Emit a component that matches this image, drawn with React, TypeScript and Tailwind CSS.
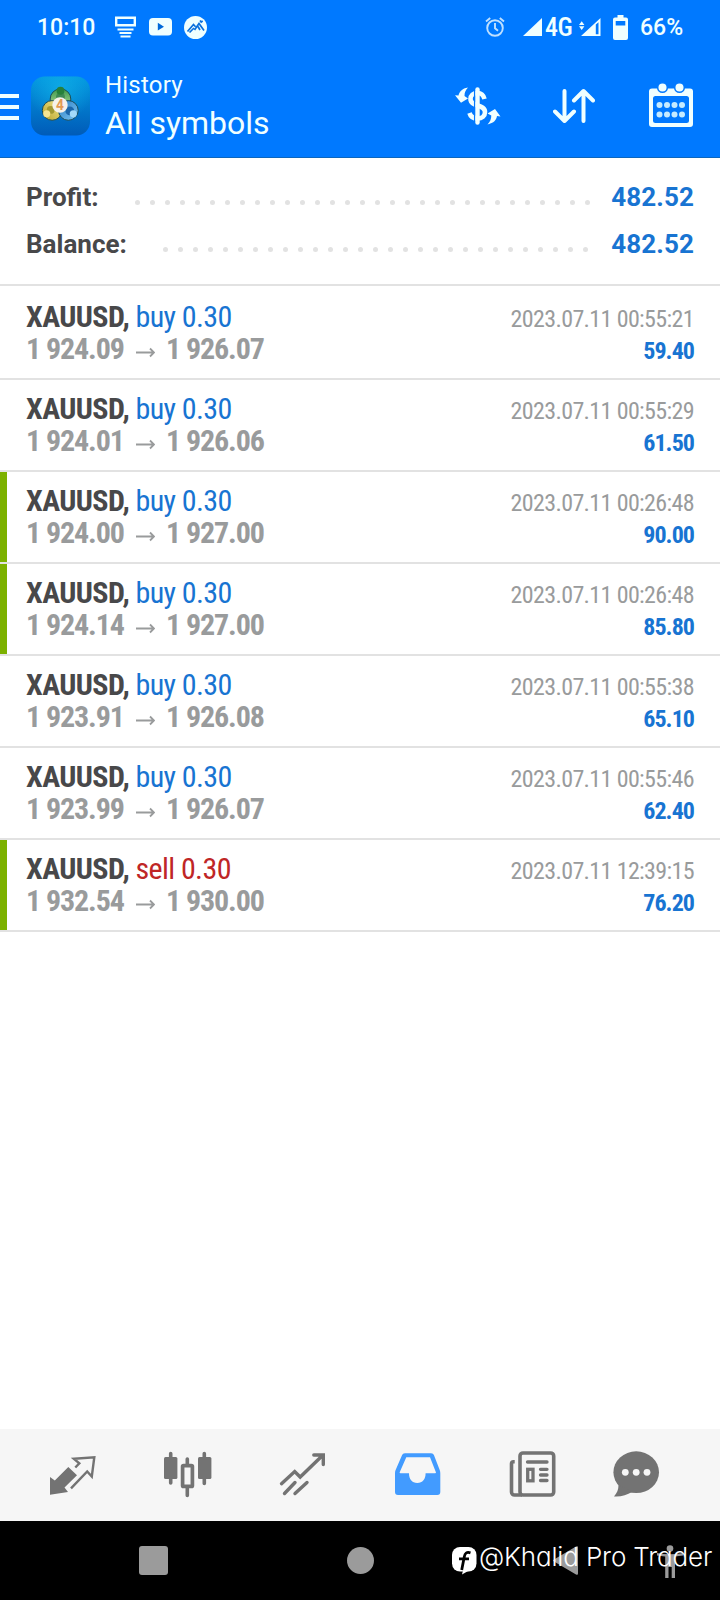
import type { ReactNode } from "react";

interface Deal {
  side: "buy" | "sell";
  open: string;
  close: string;
  time: string;
  profit: string;
  takeProfit?: boolean;
}

const deals: Deal[] = [
  { side: "buy", open: "1 924.09", close: "1 926.07", time: "2023.07.11 00:55:21", profit: "59.40" },
  { side: "buy", open: "1 924.01", close: "1 926.06", time: "2023.07.11 00:55:29", profit: "61.50" },
  { side: "buy", open: "1 924.00", close: "1 927.00", time: "2023.07.11 00:26:48", profit: "90.00", takeProfit: true },
  { side: "buy", open: "1 924.14", close: "1 927.00", time: "2023.07.11 00:26:48", profit: "85.80", takeProfit: true },
  { side: "buy", open: "1 923.91", close: "1 926.08", time: "2023.07.11 00:55:38", profit: "65.10" },
  { side: "buy", open: "1 923.99", close: "1 926.07", time: "2023.07.11 00:55:46", profit: "62.40" },
  { side: "sell", open: "1 932.54", close: "1 930.00", time: "2023.07.11 12:39:15", profit: "76.20", takeProfit: true },
];

function StatusBar() {
  return (
    <div className="flex h-[54px] items-center pl-[37px] pr-[37px] text-[23px] font-medium leading-none">
      <span className="w-[58px]">10:10</span>
      <svg className="ml-5 shrink-0" width="21" height="22" viewBox="0 0 21 22" fill="none" stroke="currentColor">
        <path d="M1.2 1.7h18.6v7.6H1.2z" strokeWidth="2.4" />
        <path d="M2.5 13.5h16M4.5 17h12M5.5 20.5h10" strokeWidth="2" />
      </svg>
      <svg className="ml-[13px] shrink-0" width="23" height="18" viewBox="0 0 23 18">
        <rect width="23" height="17.5" rx="4" fill="currentColor" />
        <path d="M8.8 4.8v7.8l6.2-3.9z" fill="#0069d9" />
      </svg>
      <svg className="ml-3 shrink-0" width="23" height="23" viewBox="0 0 23 23">
        <circle cx="11.5" cy="11.5" r="11.5" fill="currentColor" />
        <path d="M3.5 15.5l6-7 2 2.2M5.5 16.5l4.5-4.5M10.5 14l4.5-6.5 5 7M14 10.5l2 3.5M16 4.5l1.2 1.5L18.7 5" fill="none" stroke="#0a6fdc" strokeWidth="1.7" />
      </svg>
      <div className="flex-1" />
      <svg className="mr-px shrink-0" width="20" height="20" viewBox="0 0 20 20" fill="none" stroke="#bfe0ff" strokeWidth="1.9">
        <circle cx="10" cy="11" r="7.8" />
        <path d="M10 6v5.3l3 2.5M1 4.5l4.2-3.4M19 4.5l-4.2-3.4" />
      </svg>
      <svg className="ml-[17px] shrink-0" width="19" height="18" viewBox="0 0 19 18" fill="currentColor">
        <path d="M0 18L19 0v18z" />
      </svg>
      <span className="ml-[3px] w-[28px] shrink-0">
        <span className="inline-block text-[26px] tracking-[-0.5px] [font-stretch:75%]">4G</span>
      </span>
      <svg className="ml-[6px] shrink-0" width="22" height="18" viewBox="0 0 22 18" fill="currentColor">
        <path d="M0 7l2.7-3.8L5.4 7zM0 8.2h5.4L2.7 12z" />
        <path fillRule="evenodd" d="M2 18L21.5 0v18zM16.8 6.5v9.7h2.7V4.2z" />
      </svg>
      <svg className="mr-px ml-3 shrink-0" width="15" height="25" viewBox="0 0 15 25">
        <path d="M4.5 0h6v2.5H13a2 2 0 0 1 2 2V23a2 2 0 0 1-2 2H2a2 2 0 0 1-2-2V4.5a2 2 0 0 1 2-2h2.5z" fill="currentColor" />
        <path d="M2.7 6h9.6v4.5H2.7z" fill="#0079ff" />
      </svg>
      <span className="ml-[11px] w-[43px] whitespace-nowrap">66%</span>
    </div>
  );
}

function AppLogo() {
  return (
    <svg className="ml-3 shrink-0" width="59" height="60" viewBox="0 0 60 60">
      <defs>
        <linearGradient id="tile" x1="0" y1="0" x2="0" y2="1">
          <stop offset="0" stopColor="#0398e0" />
          <stop offset="1" stopColor="#005bb8" />
        </linearGradient>
        <radialGradient id="glow" cx=".5" cy=".2" r=".55">
          <stop offset="0" stopColor="#12b4e8" stopOpacity=".7" />
          <stop offset="1" stopColor="#12b4e8" stopOpacity="0" />
        </radialGradient>
        <linearGradient id="green" x1="0" y1="0" x2="0" y2="1">
          <stop offset="0" stopColor="#3f9a4c" />
          <stop offset="1" stopColor="#b5dc9a" />
        </linearGradient>
        <linearGradient id="gold" x1="0" y1="1" x2="1" y2="0">
          <stop offset="0" stopColor="#b9a42c" />
          <stop offset="1" stopColor="#f2e68c" />
        </linearGradient>
        <linearGradient id="blue" x1="0" y1="0" x2="1" y2="1">
          <stop offset="0" stopColor="#2a7cc4" />
          <stop offset="1" stopColor="#7cc6f2" />
        </linearGradient>
      </defs>
      <rect width="60" height="60" rx="14" fill="url(#tile)" />
      <rect width="60" height="60" rx="14" fill="url(#glow)" />
      <g strokeWidth="1" stroke="#1c4a55">
        <circle cx="30" cy="23" r="10.5" fill="url(#green)" />
        <circle cx="21.5" cy="34.5" r="10" fill="url(#gold)" />
        <circle cx="38" cy="34.5" r="10" fill="url(#blue)" />
      </g>
      <circle cx="30" cy="20.5" r="4.5" fill="#3f8a55" />
      <circle cx="20" cy="34" r="4" fill="#a39a32" />
      <circle cx="39.5" cy="35" r="4.5" fill="#1b66ab" />
      <circle cx="30" cy="14.5" r="4" fill="#27803a" />
      <circle cx="16" cy="38" r="3.6" fill="#f5e592" />
      <circle cx="43" cy="38" r="3.6" fill="#a3dafa" />
      <circle cx="29.5" cy="29" r="7.8" fill="#f6f1ea" />
      <text x="29.5" y="34" textAnchor="middle" fontFamily="Roboto" fontSize="14" fontWeight="700" fill="#e39a52">
        4
      </text>
    </svg>
  );
}

function Header() {
  return (
    <header className="h-[158px] border-b border-[#0c66bd] bg-[#0079ff] text-[#f0ffff]">
      <StatusBar />
      <div className="flex h-[103px] items-center">
        <div className="mt-[2px] flex w-[19px] flex-col gap-[7px]">
          <div className="h-1 bg-current" />
          <div className="h-1 bg-current" />
          <div className="h-1 bg-current" />
        </div>
        <AppLogo />
        <div className="mt-1 ml-[15px] flex-1 whitespace-nowrap">
          <div className="text-2xl leading-[31px] tracking-[0.2px]">History</div>
          <div className="text-[32px] leading-[44px]">All symbols</div>
        </div>
        <svg className="shrink-0" width="46" height="38" viewBox="0 0 46 38" fill="none" stroke="currentColor">
          <path d="M29.5 12c-1-4-3.500-6-7-6-4.500 0-7 2.500-7 6 0 8 14.500 5 14.500 13 0 4-3 6.500-7.500 6.500-4 0-7-2-8-5.500" strokeWidth="4.600" />
          <path d="M19.7 2v34" stroke="#0079ff" strokeWidth="1.500" />
          <path d="M22.5 2.500v33" strokeWidth="4.400" strokeLinecap="round" />
          <path d="M13 .5C7 1.500 4.500 4.500 3.500 8.500L0 8.300l6 7.400L13 11.500l-3.500-2.500C9.500 5.500 10.500 3 13 .5zM32.500 37.500c6.500-1.500 8.800-4.500 9.500-8.500l3.500.5-5.500-7.500-7.500 4.500 3.800 2c0 3.500-1.300 6.500-3.800 9z" fill="currentColor" stroke="none" />
        </svg>
        <svg className="mr-px ml-[52px] shrink-0" width="42" height="36" viewBox="0 0 42 36" fill="none" stroke="currentColor" strokeWidth="4" strokeLinecap="round" strokeLinejoin="round">
          <path d="M11.5 3v30M2 23.5l9.5 9.5 9.5-9.5M30.5 33V3M21 12.5L30.5 3l9.5 9.5" />
        </svg>
        <svg className="mr-[27px] mb-[2px] ml-[53px] shrink-0 overflow-visible" width="44" height="44" viewBox="0 0 44 44">
          <path fillRule="evenodd" d="M3 5.500h38a3 3 0 0 1 3 3V41a3 3 0 0 1-3 3H3a3 3 0 0 1-3-3V8.500a3 3 0 0 1 3-3zM6.500 13a2.500 2.500 0 0 0-2.500 2.500v22A2.500 2.500 0 0 0 6.500 40h31a2.500 2.500 0 0 0 2.500-2.500v-22a2.500 2.500 0 0 0-2.500-2.500z" fill="currentColor" />
          <g fill="currentColor" stroke="#0079ff" strokeWidth="1.500">
            <circle cx="13.5" cy="4.500" r="4.800" />
            <circle cx="30.5" cy="4.500" r="4.800" />
          </g>
          <g fill="#c5ebff">
            {[10.5, 18, 25.5, 33].map((x) => (
              <g key={x}>
                <circle cx={x} cy="22" r="3" />
                <circle cx={x} cy="31.5" r="3" />
              </g>
            ))}
          </g>
        </svg>
      </div>
    </header>
  );
}

function SummaryRow({ label, value, dots }: { label: string; value: string; dots: number }) {
  return (
    <div className="flex h-[47px] items-center text-[26px] font-bold">
      <span className="text-[#48484a]">{label}</span>
      <div className={`mt-[9px] ml-auto flex gap-[10px] ${dots === 31 ? "mr-[21px]" : "mr-[23px]"}`}>
        {Array.from({ length: dots }, (_, i) => (
          <i key={i} className="size-[5px] rounded-full bg-[#e2e2e2]" />
        ))}
      </div>
      <span className="w-[83px] text-right tracking-[0.1px] text-[#1874d2]">{value}</span>
    </div>
  );
}

function DealRow({ deal, first }: { deal: Deal; first: boolean }) {
  return (
    <li
      className={`flex justify-between border-b-2 border-[#e2e2e2] pr-[26px] [font-stretch:75%] ${first ? "h-[94px] pt-[15px]" : "h-[92px] pt-[13px]"} ${
        deal.takeProfit ? "bg-[linear-gradient(to_right,#7cb100_7.5px,transparent_7.5px)]" : ""
      }`}
    >
      <div className="pl-[26px] text-[30px] leading-8 whitespace-nowrap">
        <div className="tracking-[-0.6px]">
          <b className="text-[#48484a]">XAUUSD,</b>{" "}
          <span className={deal.side === "buy" ? "text-[#1874d2]" : "text-[#bf2626]"}>{deal.side} 0.30</span>
        </div>
        <div className="flex font-bold tracking-[-1.1px] text-[#999b9c]">
          <span className="w-[110px]">{deal.open}</span>
          <svg className="mt-[14px] mr-[11px]" width="19" height="11" viewBox="0 0 19 11" fill="none" stroke="currentColor" strokeWidth="1.8">
            <path d="M0 5.5h18M14 1.5l4 4-4 4" />
          </svg>
          <span>{deal.close}</span>
        </div>
      </div>
      <div className="pt-0.5 text-right text-2xl leading-8 whitespace-nowrap">
        <div className="tracking-[-0.62px] text-[#999b9c]">{deal.time}</div>
        <div className="font-bold tracking-[-0.95px] text-[#1874d2]">{deal.profit}</div>
      </div>
    </li>
  );
}

function TabIcon({ children, className = "" }: { children: ReactNode; className?: string }) {
  return (
    <svg className={`shrink-0 overflow-visible ${className}`} width="48" height="48" viewBox="0 0 48 48" fill="none" stroke="currentColor">
      {children}
    </svg>
  );
}

function TabBar() {
  return (
    <nav className="flex h-[92px] gap-[67px] bg-[#f6f6f6] pt-[21px] pl-[48px] text-[#737373]">
      <TabIcon>
        <path d="M27.3 17.5l4-4.2-5.5-4.5L46.3 7.2 43.8 26.5l-4.600-5L23 38.3" strokeWidth="2.4" />
        <path d="M2 27l4.800 3.500L20.300 17l8.700 8.300-12.500 12.200 3.500 4.500L2 44.700z" fill="currentColor" stroke="none" />
      </TabIcon>
      <TabIcon>
        <path d="M7.7 3.500v29.500M24.300 9v5M24.300 38v7.500M41.300 3.500v30" strokeWidth="3.6" strokeLinecap="round" />
        <rect x="1" y="7" width="13.4" height="22" rx="1.5" fill="currentColor" stroke="none" />
        <rect x="35" y="7" width="13.4" height="22" rx="1.5" fill="currentColor" stroke="none" />
        <rect x="19.6" y="15.6" width="9.8" height="20.8" rx="1" strokeWidth="3.7" />
      </TabIcon>
      <TabIcon>
        <path d="M3.500 33.700L16.700 21.500l5.500 5.500L45 5M35.800 5h9.500v9.500M6.500 43.500l10.500-11M17 43.500l12-11" strokeWidth="3.4" strokeLinecap="round" />
      </TabIcon>
      <TabIcon className="text-[#429bff]">
        <path
          fillRule="evenodd"
          d="M12 3.300h26c1.500 0 2.500.7 3 2l5.800 15c.4 1 .5 2 .5 3.200V42a3 3 0 0 1-3 3H5a3 3 0 0 1-3-3V23.500c0-1.200.1-2.200.5-3.200L9 5.300c.5-1.300 1.500-2 3-2zM13.300 7.300L6.700 22.300q-.3 1 .8 1h8.500c0 6 3 9.700 8.300 9.700s8.300-3.700 8.300-9.700h9.500q1.100 0 .8-1L37 7.300z"
          fill="currentColor"
          stroke="none"
        />
      </TabIcon>
      <TabIcon>
        <rect x="12" y="3" width="33.7" height="42" rx="3" strokeWidth="3.6" />
        <path d="M6.700 11.700H5.500a2 2 0 0 0-2 2V42a3 3 0 0 0 3 3H14" strokeWidth="3.6" />
        <path d="M19.500 12h19.500M32.500 19.300h6.500M32.500 25h6.500M32.500 30.500h6.500" strokeWidth="3.3" strokeLinecap="round" />
        <rect x="19.7" y="19.3" width="5.3" height="11.5" strokeWidth="3.3" />
      </TabIcon>
      <TabIcon className="-ml-[11px]">
        <ellipse cx="24.2" cy="22.2" rx="22.8" ry="20.9" fill="currentColor" stroke="none" />
        <path d="M6.500 35c0 4.500-1.500 8-4.500 11.500 7 .5 13-1.500 18-4.500z" fill="currentColor" stroke="none" />
        <g fill="#f6f6f6" stroke="none">
          <circle cx="13.3" cy="22.3" r="3.4" />
          <circle cx="24.2" cy="22.3" r="3.4" />
          <circle cx="35" cy="22.3" r="3.4" />
        </g>
      </TabIcon>
    </nav>
  );
}

function SystemNav() {
  return (
    <div className="relative flex h-[79px] items-start bg-black pt-6 pl-[139px] text-[#9b9b9b]">
      <div className="mt-px size-[29px] rounded-[3px] bg-current" />
      <div className="mt-[2px] ml-[179px] size-[27px] rounded-full bg-current" />
      <svg className="ml-[179px]" width="27" height="31" viewBox="0 0 27 31" fill="currentColor">
        <path d="M1 14.500L23 1.500q2-1 2 1v26q0 2-2 1L1 16.500q-2-1 0-2z" />
      </svg>
      <svg className="ml-[76px]" width="28" height="34" viewBox="0 0 28 34" fill="currentColor">
        <circle cx="14" cy="3.5" r="3.3" />
        <path d="M1 8q13 2.500 26 0v2.500l-8 1V33h-3.300V22h-3.200v11H9.200V11.500l-8.200-1z" />
      </svg>
      <div className="absolute top-[17px] left-[452px] flex items-center text-white">
        <svg className="mt-[8px]" width="25" height="30" viewBox="0 0 25 30">
          <rect y="1" width="24.5" height="24.5" rx="8" fill="currentColor" />
          <path d="M10 28.500l1.500-6 5.500 2z" fill="currentColor" />
          <path d="M18.500 6.800c-4-1.300-5.500.5-6.200 4L9.700 24M7 12.800h10" fill="none" stroke="#000" strokeWidth="2.8" />
        </svg>
        <span className="ml-[2px] font-[Inter,sans-serif] text-[26px] leading-8 font-light tracking-[-0.15px] whitespace-nowrap [font-feature-settings:'cv11']">
          @Khalid Pro Trader
        </span>
      </div>
    </div>
  );
}

export default function App() {
  return (
    <div className="flex h-[1600px] w-[720px] flex-col overflow-hidden bg-white font-[Roboto,sans-serif]">
      <Header />
      <section className="h-[128px] border-b-2 border-[#e2e2e2] px-[26px] pt-[16px]">
        <SummaryRow label="Profit:" value="482.52" dots={31} />
        <SummaryRow label="Balance:" value="482.52" dots={29} />
      </section>
      <ul className="flex-1">
        {deals.map((deal, i) => (
          <DealRow key={i} deal={deal} first={i === 0} />
        ))}
      </ul>
      <TabBar />
      <SystemNav />
    </div>
  );
}
